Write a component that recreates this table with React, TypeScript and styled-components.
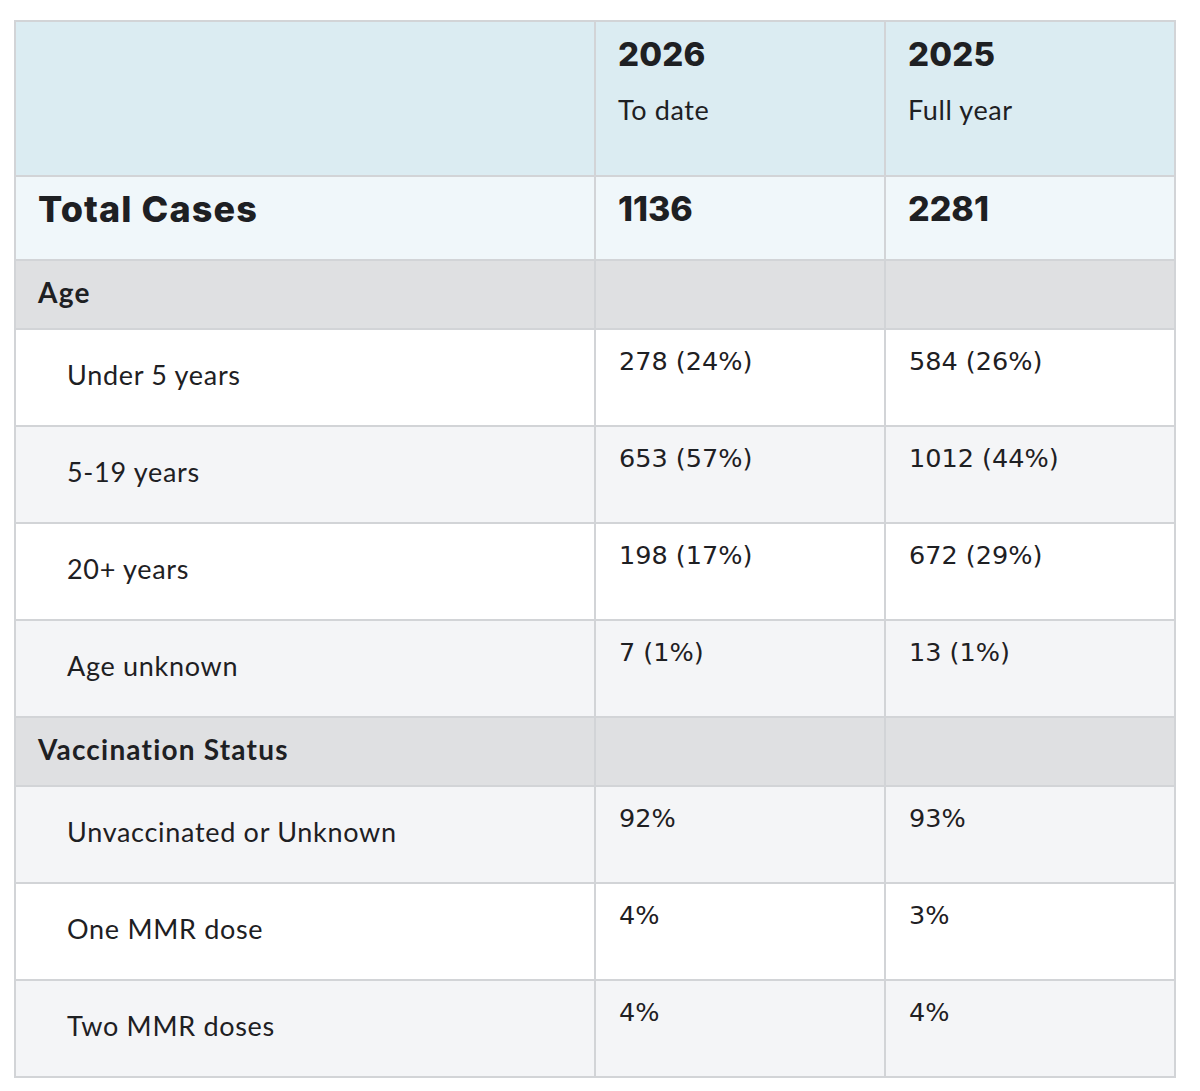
import React from "react";
import styled, { createGlobalStyle } from "styled-components";

const Global = createGlobalStyle`
  html, body { margin: 0; padding: 0; background: #ffffff; }
  body { font-family: "Lato", "Noto Sans", sans-serif; color: #1e2023; }
`;

const Page = styled.div`
  padding: 20px 26px 14px 14px;
`;

const Table = styled.table`
  width: 1160px;
  border-collapse: collapse;
  table-layout: fixed;
  border: 2px solid #d2d4d7;
`;

const HeadRow = styled.tr`
  height: 155px;
  background: #dbecf2;
`;

const TotalRow = styled.tr`
  height: 84px;
  background: #f0f7fa;
`;

const SectionRow = styled.tr`
  height: 69px;
  background: #dfe0e2;
`;

const DataRow = styled.tr<{ $shade: boolean }>`
  height: 97px;
  background: ${(p) => (p.$shade ? "#f4f5f7" : "#ffffff")};
`;

const Cell = styled.td`
  border: 2px solid #d2d4d7;
  padding: 0 22px;
`;

const HeadCell = styled(Cell)`
  vertical-align: top;
  padding-top: 12px;
`;

const Year = styled.div`
  font-family: "Inter", "Lato", sans-serif;
  font-weight: 800;
  font-size: 33px;
  line-height: 40px;
  letter-spacing: 0.2px;
`;

const Period = styled.div`
  font-family: "Lato", sans-serif;
  font-size: 27px;
  line-height: 32px;
  margin-top: 20px;
  letter-spacing: 0.6px;
`;

const TotalCell = styled(Cell)`
  vertical-align: top;
  padding-top: 11px;
  font-family: "Inter", "Lato", sans-serif;
  font-weight: 800;
  font-size: 34px;
  line-height: 42px;
`;

const TotalLabel = styled.span`
  font-size: 36px;
  letter-spacing: 1.1px;
`;

const SectionCell = styled(Cell)`
  vertical-align: middle;
  padding-bottom: 5px;
  font-family: "Lato", sans-serif;
  font-weight: 700;
  font-size: 28px;
  letter-spacing: 1.2px;
`;

const LabelCell = styled(Cell)`
  vertical-align: middle;
  padding-left: 51px;
  padding-bottom: 6px;
  font-family: "Lato", sans-serif;
  font-size: 27px;
  letter-spacing: 0.7px;
`;

const ValueCell = styled(Cell)`
  vertical-align: top;
  padding-top: 16px;
  padding-left: 23px;
  font-family: "DejaVu Sans", "Verdana", sans-serif;
  font-size: 25.5px;
  line-height: 30px;
`;

type Row = { label: string; a: string; b: string };

const ageRows: Row[] = [
  { label: "Under 5 years", a: "278 (24%)", b: "584 (26%)" },
  { label: "5-19 years", a: "653 (57%)", b: "1012 (44%)" },
  { label: "20+ years", a: "198 (17%)", b: "672 (29%)" },
  { label: "Age unknown", a: "7 (1%)", b: "13 (1%)" },
];

const vaxRows: Row[] = [
  { label: "Unvaccinated or Unknown", a: "92%", b: "93%" },
  { label: "One MMR dose", a: "4%", b: "3%" },
  { label: "Two MMR doses", a: "4%", b: "4%" },
];

export default function App() {
  return (
    <>
      <Global />
      <Page>
        <Table>
          <colgroup>
            <col style={{ width: 580 }} />
            <col style={{ width: 290 }} />
            <col style={{ width: 290 }} />
          </colgroup>
          <thead>
            <HeadRow>
              <HeadCell />
              <HeadCell>
                <Year>2026</Year>
                <Period>To date</Period>
              </HeadCell>
              <HeadCell>
                <Year>2025</Year>
                <Period>Full year</Period>
              </HeadCell>
            </HeadRow>
          </thead>
          <tbody>
            <TotalRow>
              <TotalCell>
                <TotalLabel>Total Cases</TotalLabel>
              </TotalCell>
              <TotalCell>1136</TotalCell>
              <TotalCell>2281</TotalCell>
            </TotalRow>
            <SectionRow>
              <SectionCell>Age</SectionCell>
              <SectionCell />
              <SectionCell />
            </SectionRow>
            {ageRows.map((r, i) => (
              <DataRow key={r.label} $shade={i % 2 === 1}>
                <LabelCell>{r.label}</LabelCell>
                <ValueCell>{r.a}</ValueCell>
                <ValueCell>{r.b}</ValueCell>
              </DataRow>
            ))}
            <SectionRow>
              <SectionCell>Vaccination Status</SectionCell>
              <SectionCell />
              <SectionCell />
            </SectionRow>
            {vaxRows.map((r, i) => (
              <DataRow key={r.label} $shade={i % 2 === 0}>
                <LabelCell>{r.label}</LabelCell>
                <ValueCell>{r.a}</ValueCell>
                <ValueCell>{r.b}</ValueCell>
              </DataRow>
            ))}
          </tbody>
        </Table>
      </Page>
    </>
  );
}
